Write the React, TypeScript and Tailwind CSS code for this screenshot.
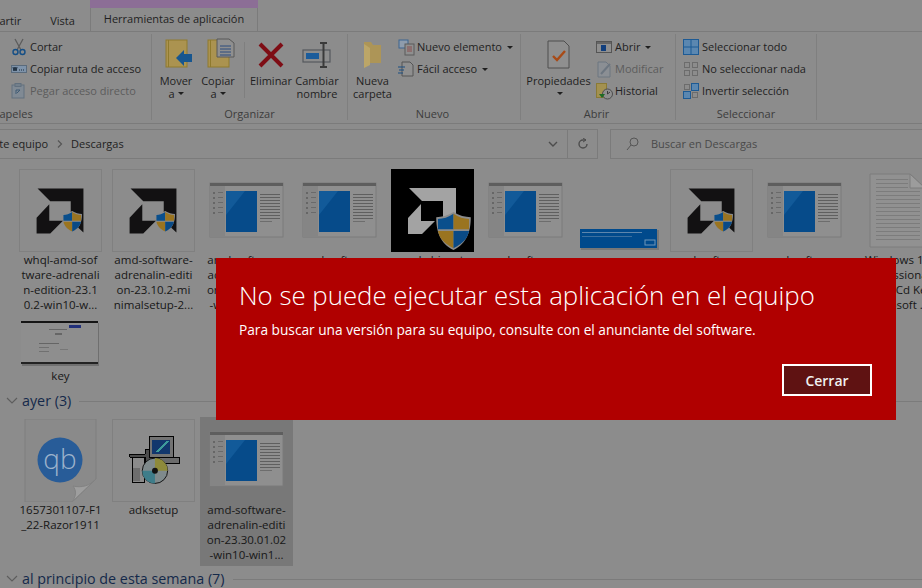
import type { ReactNode } from "react";

const AmdThumb = ({ inverted = false }: { inverted?: boolean }) => {
  const logo = inverted ? "#a3a3a3" : "#121112";
  return (
    <svg width="83" height="83" viewBox="0 0 83 83">
      <rect x="0" y="0" width="83" height="83" fill={inverted ? "#000" : "transparent"} />
      <path d="M18 19 H65 V64 L52 52 V32 H31 Z" fill={logo} />
      <path d="M17 49 L30 35 V52 H44 L31 65 H17 Z" fill={logo} />
      {inverted ? <Shield x={44} y={43} w={37} h={38} /> : <Shield x={43} y={42} w={21} h={22} />}
    </svg>
  );
};

// escudo UAC en cuatro cuartos
const Shield = ({ x, y, w, h }: { x: number; y: number; w: number; h: number }) => (
  <svg x={x} y={y} width={w} height={h} viewBox="0 0 20 22">
    <path d="M10 0 C7 2 3 3 0 3 C0 11 2 18 10 22 C18 18 20 11 20 3 C17 3 13 2 10 0 Z" fill="#8c8c8c" />
    <path d="M10 1 C7 3 4 4 1 4 L1 10 H10 Z" fill="#0a4f8c" />
    <path d="M10 1 C13 3 16 4 19 4 L19 10 H10 Z" fill="#9a7420" />
    <path d="M1 11 H10 V21 C4 18 2 15 1 11 Z" fill="#9a7420" />
    <path d="M19 11 H10 V21 C16 18 18 15 19 11 Z" fill="#0a4a85" />
  </svg>
);

const SetupThumb = () => (
  <svg width="83" height="83" viewBox="0 0 83 83">
    <rect x="5" y="14" width="73" height="54" fill="#8f8f8f" stroke="#7b7b7b" />
    <rect x="5" y="14" width="73" height="3" fill="#5e5e5e" />
    <rect x="5" y="17" width="15" height="51" fill="#858585" />
    {[23, 28, 33, 38, 43].map((y) => (
      <g key={y}>
        <rect x="8" y={y} width="2" height="2" fill="#666" />
        <rect x="13" y={y} width="5" height="1" fill="#6a6a6a" />
      </g>
    ))}
    <rect x="21" y="22" width="31" height="41" fill="#064b8a" />
    <path d="M21 22 H40 L21 46 Z" fill="#125a99" />
    {[25, 28, 31, 34, 37, 40, 43, 46, 49].map((y) => (
      <rect key={y} x="55" y={y} width="20" height="1" fill="#5f5f5f" />
    ))}
    <rect x="55" y="52" width="12" height="1" fill="#6d6d6d" />
  </svg>
);

const ErrorThumb = () => (
  <svg width="83" height="83" viewBox="0 0 83 83">
    <rect x="4" y="61" width="78" height="20" fill="#777" />
    <rect x="3" y="60" width="77" height="19" fill="#004a8c" />
    <rect x="5" y="63" width="60" height="1" fill="#5d86ad" />
    <rect x="5" y="67" width="50" height="1" fill="#3b6f9f" />
    <rect x="68" y="71" width="10" height="5" fill="none" stroke="#6f95b8" />
  </svg>
);

const TextDoc = () => (
  <svg width="83" height="83" viewBox="0 0 83 83">
    <path d="M14 5 H54 L69 19 V78 H14 Z" fill="#919191" stroke="#7d7d7d" />
    <path d="M54 5 V19 H69 Z" fill="#9c9c9c" stroke="#7d7d7d" />
    {[10, 14, 18, 22, 26, 30, 34, 38, 42, 46, 50, 54, 58, 62, 66, 70].map((y) => (
      <rect key={y} x="20" y={y} width={y < 20 ? 32 : 44} height="1" fill="#7c7c7c" />
    ))}
  </svg>
);

const KeyThumb = () => (
  <svg width="83" height="47" viewBox="0 0 83 47">
    <rect x="3" y="3" width="77" height="43" fill="#6f6f6f" />
    <rect x="2" y="1" width="77" height="43" fill="#8e8e8e" />
    <rect x="2" y="1" width="77" height="2" fill="#151515" />
    <rect x="2" y="42" width="77" height="2" fill="#222" />
    <rect x="50" y="5" width="12" height="3" fill="#22307a" />
    <rect x="30" y="9" width="18" height="1" fill="#666" />
    <rect x="36" y="13" width="7" height="2" fill="#666" />
    <rect x="20" y="23" width="20" height="1" fill="#656565" />
    <rect x="20" y="27" width="10" height="1" fill="#707070" />
    <rect x="20" y="31" width="10" height="1" fill="#707070" />
    <rect x="41" y="29" width="8" height="1" fill="#777" />
  </svg>
);

const QbDoc = () => (
  <svg width="83" height="83" viewBox="0 0 83 83">
    <path d="M6 0 H77 V60 L53 83 H6 Z" fill="#8a8a8a" stroke="#7f7f7f" />
    <path d="M53 83 C58 76 57 71 54 67 C62 69 71 67 77 60 Z" fill="#9e9e9e" stroke="#828282" />
    <circle cx="41" cy="41" r="22.5" fill="#285c98" />
    <text x="41" y="50" textAnchor="middle" fontSize="28" fontWeight="300" fill="#9db3cc" fontFamily="'Open Sans', sans-serif">
      qb
    </text>
  </svg>
);

const SetupBox = () => (
  <svg width="83" height="83" viewBox="0 0 83 83" shapeRendering="crispEdges">
    <rect x="20" y="35" width="12" height="29" fill="#8b8b8b" stroke="#000" />
    <rect x="21" y="49" width="7" height="14" fill="#6d6d6d" />
    <path d="M17 35 H33 V30 H41 V60 H33 V38 H17 Z" fill="#4c4c4c" stroke="#000" />
    <rect x="37" y="17" width="25" height="21" fill="#737373" stroke="#000" />
    <rect x="40" y="20" width="18" height="15" fill="#12376d" />
    <path d="M43 33 L54 22 H57 L46 33 Z" fill="#3d9a9a" />
    <rect x="43" y="38" width="25" height="7" fill="#6b6b6b" stroke="#000" />
    <circle cx="43" cy="52" r="13" fill="#7f8a8c" stroke="#111" shapeRendering="auto" />
    <path d="M43 39 A13 13 0 0 1 56 52 H43 Z" fill="#8e8a3a" shapeRendering="auto" />
    <path d="M43 52 H30 A13 13 0 0 0 43 65 Z" fill="#3e7d8a" shapeRendering="auto" />
    <circle cx="43" cy="52" r="3" fill="#111" shapeRendering="auto" />
  </svg>
);

type FileItem = { lines: string[]; thumb: ReactNode; boxed?: boolean; thumbH?: number; selected?: boolean };

const FileTile = ({ lines, thumb, boxed, thumbH = 83, selected }: FileItem) => (
  <div className={`w-[93px] flex flex-col items-center ${selected ? "bg-[#787878]" : ""}`}>
    <div
      className={`w-[83px] flex items-center justify-center ${boxed ? "border border-[#808080]" : ""}`}
      style={{ height: thumbH }}
    >
      {thumb}
    </div>
    <div className="pb-[4px]">
      {lines.map((l, i) => (
        <div key={i} className="text-center whitespace-nowrap text-[11.5px] leading-[15px] text-[#171717]">
          {l}
        </div>
      ))}
    </div>
  </div>
);

const setupLines = ["amd-software-", "adrenalin-editi", "on-23.10.2-win", "-win10-win1..."];

const rowOne: FileItem[] = [
  { lines: ["whql-amd-sof", "tware-adrenali", "n-edition-23.1", "0.2-win10-w..."], thumb: <AmdThumb />, boxed: true },
  { lines: ["amd-software-", "adrenalin-editi", "on-23.10.2-mi", "nimalsetup-2..."], thumb: <AmdThumb />, boxed: true },
  { lines: setupLines, thumb: <SetupThumb /> },
  { lines: setupLines, thumb: <SetupThumb /> },
  { lines: ["amd-chipset-", "drivers"], thumb: <AmdThumb inverted /> },
  { lines: setupLines, thumb: <SetupThumb /> },
  { lines: ["error"], thumb: <ErrorThumb /> },
  { lines: setupLines, thumb: <AmdThumb />, boxed: true },
  { lines: setupLines, thumb: <SetupThumb /> },
  { lines: ["Windows 10", "Professional", "Retail Cd Key", "Microsoft ..."], thumb: <TextDoc /> },
];

const GroupHeader = ({ label, lineClass }: { label: string; lineClass: string }) => (
  <div className="flex items-center h-[20px]">
    <svg width="12" height="8" viewBox="0 0 12 8" className="ml-[6px] shrink-0">
      <path d="M1 1 L6 6 L11 1" fill="none" stroke="#5d5d5d" strokeWidth="1.1" />
    </svg>
    <span className={`text-[14.3px] text-[#14294a] whitespace-nowrap ${lineClass}`}>{label}</span>
    <div className="flex-1 h-px bg-[#7b7b7b] ml-[8px]" />
  </div>
);

const SmallRow = ({ icon, label, dim, caret }: { icon: ReactNode; label: string; dim?: boolean; caret?: boolean }) => (
  <div className={`h-[22px] flex items-center whitespace-nowrap ${dim ? "text-[#5c5c5c]" : "text-[#1f1f1f]"}`}>
    <div className="w-[19px] h-[18px] flex items-center justify-start shrink-0">{icon}</div>
    <span>{label}</span>
    {caret && <span className="ml-[5px] w-0 h-0 border-x-[3px] border-x-transparent border-t-[3px] border-t-[#1f1f1f]" />}
  </div>
);

const BigButton = ({ icon, lines, caret, w }: { icon: ReactNode; lines: string[]; caret?: boolean; w: string }) => (
  <div className={`${w} flex flex-col items-center shrink-0`}>
    <div className="h-[34px] flex items-center justify-center mt-[2px]">{icon}</div>
    <div className="text-center leading-[13px] text-[#1f1f1f] mt-[2px] whitespace-nowrap">
      {lines.map((l, i) => (
        <div key={i} className="h-[13px] flex items-center justify-center">
          {l}
          {caret && i === lines.length - 1 && (
            <span className="ml-[3px] w-0 h-0 border-x-[3px] border-x-transparent border-t-[3px] border-t-[#1f1f1f]" />
          )}
        </div>
      ))}
    </div>
  </div>
);

const RibbonGroup = ({ w, label, labelClass = "", children }: { w: string; label: string; labelClass?: string; children: ReactNode }) => (
  <div className={`${w} shrink-0 h-[86px] mt-[2px] border-r border-[#7f7f7f] flex flex-col`}>
    <div className="flex-1 flex pt-[2px]">{children}</div>
    <div className={`h-[16px] -mb-[2px] text-center leading-[16px] text-[#3c3c3c] whitespace-nowrap ${labelClass}`}>{label}</div>
  </div>
);

const FolderIcon = ({ children }: { children?: ReactNode }) => (
  <svg width="36" height="34" viewBox="0 0 36 34">
    <rect x="8" y="2" width="21" height="27" fill="#ab9350" stroke="#8f7a2e" />
    <rect x="10" y="2" width="1" height="27" fill="#8f7a2e" />
    {children}
  </svg>
);

export default function App() {
  return (
    <div className="relative w-[922px] h-[588px] overflow-hidden bg-[#8c8c8c] text-[11px] font-['Open_Sans',sans-serif]">
      {/* pestañas */}
      <div className="h-[32px] flex border-b border-[#7b7b7b] text-[#1f1f1f]">
        <div className="w-[90px] flex items-center pt-[12px] whitespace-nowrap overflow-hidden">
          <span className="ml-[-31px]">Compartir</span>
          <span className="ml-[29px]">Vista</span>
        </div>
        <div className="w-[168px] h-[31px] flex flex-col">
          <div className="h-[8px] bg-[#8c6e96]" />
          <div className="flex-1 flex items-center justify-center border-x border-[#7b7b7b]">Herramientas de aplicación</div>
        </div>
      </div>

      {/* cinta */}
      <div className="h-[92px] flex border-b border-[#7b7b7b]">
        <RibbonGroup w="w-[152px]" label="Portapapeles" labelClass="w-[64px] ml-[-35px] text-left">
          <div className="flex flex-col pl-[11px]">
            <SmallRow
              label="Cortar"
              icon={
                <svg width="16" height="18" viewBox="0 0 16 18">
                  <path d="M4 1 L10 12 M12 1 L6 12" stroke="#5c5c5c" strokeWidth="1.3" />
                  <circle cx="4.5" cy="14" r="2.5" fill="none" stroke="#154f86" strokeWidth="1.4" />
                  <circle cx="11.5" cy="14" r="2.5" fill="none" stroke="#154f86" strokeWidth="1.4" />
                </svg>
              }
            />
            <SmallRow
              label="Copiar ruta de acceso"
              icon={
                <svg width="16" height="10" viewBox="0 0 16 10">
                  <rect x="0.5" y="1.5" width="15" height="7" fill="#7e93aa" stroke="#5a6b7c" />
                  <path d="M2 3 L3 7 L4 3 L5 7 L6 3 M8 6 H9 M10 6 H11 M12 6 H13" stroke="#1a2a3a" fill="none" />
                </svg>
              }
            />
            <SmallRow
              dim
              label="Pegar acceso directo"
              icon={
                <svg width="14" height="16" viewBox="0 0 14 16">
                  <rect x="1" y="2" width="12" height="13" fill="#808a94" stroke="#62707e" />
                  <rect x="4" y="0.5" width="6" height="3" fill="#73808c" stroke="#62707e" />
                  <path d="M5 11 V7 H9 M6 10 L9 7" stroke="#3e5a74" fill="none" />
                </svg>
              }
            />
          </div>
        </RibbonGroup>

        <RibbonGroup w="w-[196px]" label="Organizar">
          <div className="w-[3px] shrink-0" />
          <BigButton
            w="w-[42px]"
            lines={["Mover", "a"]}
            caret
            icon={
              <FolderIcon>
                <path d="M18 20 L26 12 V16 H34 V24 H26 V28 Z" fill="#17568f" />
              </FolderIcon>
            }
          />
          <BigButton
            w="w-[42px]"
            lines={["Copiar", "a"]}
            caret
            icon={
              <FolderIcon>
                <path d="M17 1 H29 L34 5 V19 H17 Z" fill="#8f8f8f" stroke="#585858" />
                <path d="M20 8 H31 M20 11 H31 M20 14 H31 M20 17 H31" stroke="#2b4a7c" />
              </FolderIcon>
            }
          />
          <div className="w-px h-[56px] bg-[#7f7f7f] mt-[6px] ml-[5px] mr-[4px]" />
          <BigButton
            w="w-[44px]"
            lines={["Eliminar", " "]}
            icon={
              <svg width="26" height="26" viewBox="0 0 26 26">
                <path d="M2 2 L24 24 M24 2 L2 24" stroke="#7e0d15" strokeWidth="4" />
              </svg>
            }
          />
          <BigButton
            w="w-[48px]"
            lines={["Cambiar", "nombre"]}
            icon={
              <svg width="30" height="28" viewBox="0 0 30 28">
                <rect x="1" y="9" width="27" height="12" fill="none" stroke="#55595e" strokeWidth="1.2" />
                <rect x="4" y="12" width="13" height="6" fill="#1b5c9b" />
                <path d="M18 2 H25 M21.5 2 V26 M18 26 H25" stroke="#3a3a3a" strokeWidth="2" fill="none" />
              </svg>
            }
          />
        </RibbonGroup>

        <RibbonGroup w="w-[173px]" label="Nuevo" labelClass="pr-[3px]">
          <BigButton
            w="w-[49px]"
            lines={["Nueva", "carpeta"]}
            icon={
              <svg width="20" height="28" viewBox="0 0 20 28">
                <path d="M1 1 H8 L10 4 H18 V22 H6 L1 27 Z" fill="#ad9557" />
                <path d="M1 3 L7 7 V24 L1 27 Z" fill="#bca668" />
              </svg>
            }
          />
          <div className="flex flex-col pl-[1px]">
            <SmallRow
              caret
              label="Nuevo elemento"
              icon={
                <svg width="17" height="17" viewBox="0 0 17 17">
                  <rect x="1" y="1" width="9" height="8" fill="#8e9cac" stroke="#3c658f" />
                  <rect x="7" y="5" width="9" height="11" fill="#8f8f8f" stroke="#5b5b5b" />
                  <path d="M9 8 H14 M9 10 H14 M9 12 H14" stroke="#8a4f4f" />
                </svg>
              }
            />
            <SmallRow
              caret
              label="Fácil acceso"
              icon={
                <svg width="16" height="17" viewBox="0 0 16 17">
                  <path d="M4 1 H12 L15 4 V15 H4 Z" fill="#8f8f8f" stroke="#555" />
                  <path d="M0 6 H7 M1 9 H6 M0 12 H5" stroke="#1b4e82" strokeWidth="1.2" />
                </svg>
              }
            />
          </div>
        </RibbonGroup>

        <RibbonGroup w="w-[155px]" label="Abrir" labelClass="pr-[3px]">
          <BigButton
            w="w-[75px]"
            lines={["Propiedades", " "]}
            caret
            icon={
              <svg width="24" height="30" viewBox="0 0 24 30">
                <path d="M1 1 H17 L22 6 V28 H1 Z" fill="#8f8f8f" stroke="#4e4e4e" />
                <path d="M6 16 L10 20 L18 11" fill="none" stroke="#a84a16" strokeWidth="2.4" />
              </svg>
            }
          />
          <div className="flex flex-col">
            <SmallRow
              caret
              label="Abrir"
              icon={
                <svg width="17" height="13" viewBox="0 0 17 13">
                  <rect x="0.5" y="0.5" width="15" height="11" fill="#8f8f8f" stroke="#555" />
                  <rect x="1" y="1" width="14" height="2" fill="#666" />
                  <rect x="5" y="4" width="5" height="6" fill="#123f7d" />
                </svg>
              }
            />
            <SmallRow
              dim
              label="Modificar"
              icon={
                <svg width="17" height="17" viewBox="0 0 17 17">
                  <path d="M2 1 H10 L14 5 V16 H2 Z" fill="#8b8f94" stroke="#6d7680" />
                  <path d="M5 13 L14 3" stroke="#6d7680" strokeWidth="2" />
                </svg>
              }
            />
            <SmallRow
              label="Historial"
              icon={
                <svg width="17" height="17" viewBox="0 0 17 17">
                  <rect x="0.5" y="0.5" width="10" height="14" fill="#a39150" stroke="#8a7a35" />
                  <circle cx="11.5" cy="11" r="5" fill="#8f8f8f" stroke="#4d4d4d" />
                  <path d="M11.5 8 V11 L14 9" stroke="#3c3c3c" fill="none" />
                  <path d="M3 11 L6 15 L9 11 Z" fill="#1e6b25" />
                </svg>
              }
            />
          </div>
        </RibbonGroup>

        <RibbonGroup w="w-[141px]" label="Seleccionar">
          <div className="flex flex-col pl-[7px]">
            <SmallRow
              label="Seleccionar todo"
              icon={
                <svg width="16" height="16" viewBox="0 0 16 16">
                  <rect x="0.5" y="0.5" width="15" height="15" fill="#5b87b0" stroke="#1d5a94" />
                  <path d="M8 0 V16 M0 8 H16" stroke="#1d5a94" />
                </svg>
              }
            />
            <SmallRow
              label="No seleccionar nada"
              icon={
                <svg width="16" height="16" viewBox="0 0 16 16" fill="none" stroke="#6c6c6c">
                  <rect x="1.5" y="1.5" width="5" height="5" />
                  <rect x="9.5" y="1.5" width="5" height="5" />
                  <rect x="1.5" y="9.5" width="5" height="5" />
                  <rect x="9.5" y="9.5" width="5" height="5" />
                </svg>
              }
            />
            <SmallRow
              label="Invertir selección"
              icon={
                <svg width="16" height="16" viewBox="0 0 16 16">
                  <rect x="1.5" y="1.5" width="5" height="5" fill="none" stroke="#6c6c6c" />
                  <rect x="8.5" y="0.5" width="7" height="7" fill="#5b87b0" stroke="#1d5a94" />
                  <rect x="0.5" y="8.5" width="7" height="7" fill="#5b87b0" stroke="#1d5a94" />
                  <rect x="9.5" y="9.5" width="5" height="5" fill="none" stroke="#6c6c6c" />
                </svg>
              }
            />
          </div>
        </RibbonGroup>
      </div>

      {/* barra de direcciones */}
      <div className="h-[30px] mt-[5px] flex">
        <div className="w-[598px] border-y border-r border-[#7b7b7b] flex items-center whitespace-nowrap text-[#1f1f1f]">
          <span className="ml-[-12px]">Este equipo</span>
          <svg width="6" height="8" viewBox="0 0 6 8" className="ml-[9px]">
            <path d="M1 0.5 L4.5 4 L1 7.5" fill="none" stroke="#555" strokeWidth="1.2" />
          </svg>
          <span className="ml-[8px]">Descargas</span>
          <div className="flex-1" />
          <svg width="10" height="6" viewBox="0 0 10 6" className="mr-[9px]">
            <path d="M1 1 L5 5 L9 1" fill="none" stroke="#4d4d4d" strokeWidth="1.4" />
          </svg>
          <div className="w-[30px] h-full border-l border-[#7b7b7b] flex items-center justify-center">
            <svg width="12" height="12" viewBox="0 0 12 12">
              <path d="M10 6 A4 4 0 1 1 6 2 H9" fill="none" stroke="#4d4d4d" strokeWidth="1.4" />
              <path d="M6 0 L9 2 L6 4" fill="none" stroke="#4d4d4d" />
            </svg>
          </div>
        </div>
        <div className="ml-[12px] flex-1 border-y border-l border-[#7b7b7b] flex items-center text-[#4a4a4a]">
          <svg width="13" height="14" viewBox="0 0 13 14" className="ml-[15px]">
            <circle cx="8" cy="5" r="4" fill="none" stroke="#555" />
            <path d="M5 8 L1 13" stroke="#555" />
          </svg>
          <span className="ml-[12px]">Buscar en Descargas</span>
        </div>
      </div>

      {/* archivos */}
      <div className="pt-[10px] flex flex-col">
        <div className="pl-[14px] flex h-[150px] w-[950px]">
          {rowOne.map((f, i) => (
            <FileTile key={i} {...f} />
          ))}
        </div>
        <div className="pl-[14px] -mt-[1px] h-[73px]">
          <FileTile lines={["key"]} thumb={<KeyThumb />} thumbH={50} />
        </div>
        <GroupHeader label="ayer (3)" lineClass="ml-[4px]" />
        <div className="pl-[14px] flex items-start h-[150px] mt-[8px]">
          <FileTile lines={["1657301107-F1", "_22-Razor1911"]} thumb={<QbDoc />} />
          <FileTile lines={["adksetup"]} thumb={<SetupBox />} boxed />
          <div className="mt-[-2px]">
            <FileTile
              selected
              lines={["amd-software-", "adrenalin-editi", "on-23.30.01.02", "-win10-win1..."]}
              thumb={<SetupThumb />}
              thumbH={85}
            />
          </div>
        </div>
        <GroupHeader label="al principio de esta semana (7)" lineClass="ml-[4px]" />
      </div>

      {/* aviso de SmartScreen */}
      <div className="absolute left-[216px] top-[258px] w-[680px] h-[162px] bg-[#b00000] text-white flex flex-col pl-[23px] pr-[24px]">
        <h1 className="text-[25.8px] font-light leading-[32px] mt-[21px] whitespace-nowrap">No se puede ejecutar esta aplicación en el equipo</h1>
        <p className="text-[13.7px] leading-[20px] mt-[9px] whitespace-nowrap">
          Para buscar una versión para su equipo, consulte con el anunciante del software.
        </p>
        <div className="flex justify-end mt-[24px]">
          <button className="w-[90px] h-[32px] border-2 border-white bg-[#5f1212] text-[14px] font-semibold text-[#f0f0f0]">Cerrar</button>
        </div>
      </div>
    </div>
  );
}
